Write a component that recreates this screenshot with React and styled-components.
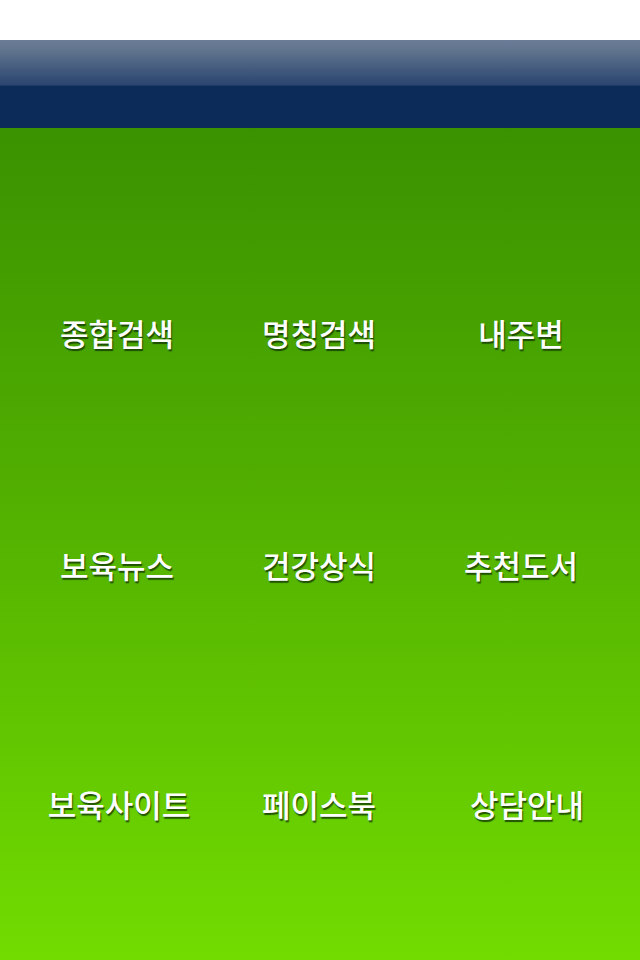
import React from "react";
import styled, { createGlobalStyle } from "styled-components";

const GlobalStyle = createGlobalStyle`
  html, body {
    margin: 0;
    padding: 0;
    background: #ffffff;
  }
  #root {
    width: 640px;
    height: 960px;
  }
`;

const items = [
  { label: "종합검색" },
  { label: "명칭검색" },
  { label: "내주변" },
  { label: "보육뉴스" },
  { label: "건강상식" },
  { label: "추천도서" },
  { label: "보육사이트", shift: 2 },
  { label: "페이스북" },
  { label: "상담안내", shift: 6 },
];

function App() {
  return (
    <>
      <GlobalStyle />
      <Page>
        <StatusBar />
        <TitleBar>
          <TitleGloss />
          <TitleBase />
        </TitleBar>
        <Menu>
          {items.map((item) => (
            <MenuItem key={item.label} $shift={item.shift || 0}>
              {item.label}
            </MenuItem>
          ))}
        </Menu>
      </Page>
    </>
  );
}

const Page = styled.div`
  width: 640px;
  height: 960px;
  display: flex;
  flex-direction: column;
  overflow: hidden;
`;

const StatusBar = styled.div`
  height: 40px;
  background: #ffffff;
`;

const TitleBar = styled.header`
  display: flex;
  flex-direction: column;
  height: 88px;
`;

const TitleGloss = styled.div`
  height: 46px;
  background: linear-gradient(#6a7c97 0%, #63768f 20%, #2a4570 100%);
  border-bottom: 1px solid #1f3a66;
  box-sizing: border-box;
`;

const TitleBase = styled.div`
  flex: 1;
  background: #0c2b59;
`;

const Menu = styled.nav`
  flex: 1;
  background: linear-gradient(#3a9200 0%, #52b000 45%, #72dc00 100%);
  display: grid;
  grid-template-columns: repeat(3, 202px);
  grid-template-rows: 228px 236px 242px;
  padding: 90px 0 0 16px;
  box-sizing: border-box;
  align-content: start;
`;

const MenuItem = styled.a`
  display: flex;
  align-items: center;
  justify-content: center;
  padding-left: ${(p) => p.$shift * 2}px;
  color: #ffffff;
  font-family: "Noto Sans CJK KR", "Noto Sans", sans-serif;
  font-weight: 500;
  font-size: 31px;
  text-shadow: 1px 2px 1px rgba(20, 60, 0, 0.85);
  cursor: pointer;
`;

export default App;
